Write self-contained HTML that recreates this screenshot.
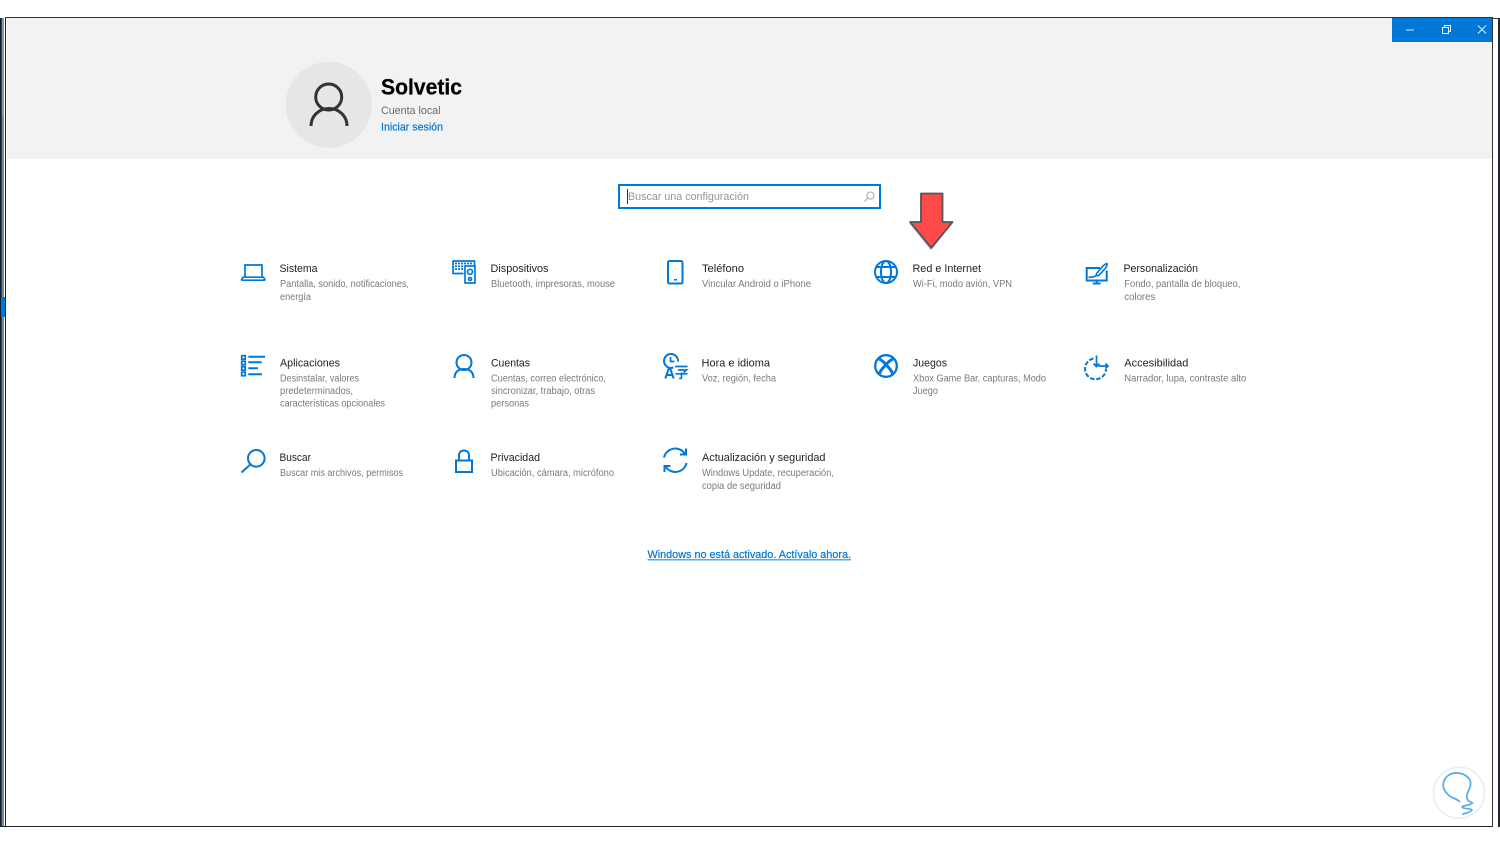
<!DOCTYPE html>
<html lang="es"><head><meta charset="utf-8"><title>Configuración</title>
<style>
html,body{margin:0;padding:0;width:1500px;height:844px;overflow:hidden;background:#fff}
svg{display:block;position:absolute;left:0;top:0}
text{font-family:"Liberation Sans",sans-serif}
.t{font-size:11px;fill:#222}
.s{font-size:10px;fill:#7a7a7a}
.b{stroke:#0078d7;stroke-width:.2}
.i{fill:none;stroke:#0078d7;stroke-width:2}
.j{fill:none;stroke:#0078d7;stroke-width:1.7}
</style></head><body>
<svg width="1500" height="844" viewBox="0 0 1500 844" xmlns="http://www.w3.org/2000/svg">
<!-- window frame -->
<rect x="0" y="18" width="1" height="808" fill="#10202c"/>
<rect x="1" y="18" width="1" height="808" fill="#2f3e4a"/>
<rect x="2" y="18" width="2" height="808" fill="#8f979e"/>
<rect x="1" y="115" width="1" height="711" fill="#0a4a80"/>
<rect x="2" y="115" width="2" height="711" fill="#76879a"/>
<rect x="1" y="297" width="4" height="20" fill="#0078d7"/>
<rect x="5" y="17" width="1" height="809" fill="#222"/>
<rect x="5" y="17" width="1488" height="1" fill="#333"/>
<rect x="0" y="826" width="1493" height="1" fill="#222"/>
<rect x="7" y="18" width="1485" height="141" fill="#f2f2f2"/>
<rect x="1492" y="18" width="1" height="809" fill="#333"/>
<rect x="1498" y="19" width="2" height="808" fill="#22262a"/>
<rect x="1493" y="18" width="7" height="1" fill="#333"/>
<!-- caption buttons -->
<rect x="1392" y="18" width="100" height="24" fill="#0078d7"/>
<rect x="1406" y="29.500" width="8" height="1" fill="#dbeaf8"/>
<path d="M1442.500 27.500h6v6h-6zM1444.500 27.500v-2h6v6h-2" fill="none" stroke="#fff" stroke-width="1"/>
<path d="M1478 25.500l8 8M1486 25.500l-8 8" fill="none" stroke="#e6f1fb" stroke-width="1"/>
<!-- profile -->
<circle cx="328.700" cy="104.800" r="43" fill="#e6e6e6"/>
<circle cx="328.700" cy="97" r="13" fill="none" stroke="#333" stroke-width="3"/>
<path d="M311 126c0-10 8-17.500 18-17.500s18 7.500 18 17.500" fill="none" stroke="#333" stroke-width="3"/>
<text x="381" y="94.500" font-size="22" font-weight="700" fill="#000" stroke="#000" stroke-width=".25" textLength="81" lengthAdjust="spacingAndGlyphs">Solvetic</text>
<text x="381" y="114" font-size="11" fill="#6b6b6b" textLength="59.500" lengthAdjust="spacingAndGlyphs">Cuenta local</text>
<text class="b" x="381" y="130.500" font-size="11" fill="#0078d7" textLength="62" lengthAdjust="spacingAndGlyphs">Iniciar sesión</text>
<!-- search -->
<rect x="619" y="185" width="261" height="23" fill="#fff" stroke="#0078d7" stroke-width="2"/>
<rect x="627" y="189" width="1" height="15" fill="#333"/>
<text x="628" y="200" font-size="11" fill="#959595" textLength="121" lengthAdjust="spacingAndGlyphs">Buscar una configuración</text>
<circle cx="870.500" cy="195.500" r="3.500" fill="none" stroke="#aaa" stroke-width="1"/>
<path d="M868 198l-3.500 3.500" fill="none" stroke="#aaa" stroke-width="1"/>
<!-- arrow -->
<path d="M921 194h21v28h10.500l-21 26-21-26H921z" fill="#000" opacity=".18" transform="translate(-1 2)"/>
<path d="M921 193.500h21.500v28.500h10l-21.200 26-21.200-26h10.900z" fill="#ff4a4a" stroke="#555" stroke-width="1.800" stroke-linejoin="round"/>
<!-- row 1 texts -->
<text class="t" x="279.500" y="272" textLength="38" lengthAdjust="spacingAndGlyphs">Sistema</text>
<text class="s" x="280" y="287" textLength="129" lengthAdjust="spacingAndGlyphs">Pantalla, sonido, notificaciones,</text>
<text class="s" x="280" y="300" textLength="31" lengthAdjust="spacingAndGlyphs">energía</text>
<text class="t" x="490.500" y="272" textLength="58" lengthAdjust="spacingAndGlyphs">Dispositivos</text>
<text class="s" x="491" y="287" textLength="124" lengthAdjust="spacingAndGlyphs">Bluetooth, impresoras, mouse</text>
<text class="t" x="702" y="272" textLength="42" lengthAdjust="spacingAndGlyphs">Teléfono</text>
<text class="s" x="702" y="287" textLength="109" lengthAdjust="spacingAndGlyphs">Vincular Android o iPhone</text>
<text class="t" x="912.500" y="272" textLength="68.500" lengthAdjust="spacingAndGlyphs">Red e Internet</text>
<text class="s" x="913" y="287" textLength="99" lengthAdjust="spacingAndGlyphs">Wi-Fi, modo avión, VPN</text>
<text class="t" x="1123.500" y="272" textLength="74.500" lengthAdjust="spacingAndGlyphs">Personalización</text>
<text class="s" x="1124.300" y="287" textLength="116" lengthAdjust="spacingAndGlyphs">Fondo, pantalla de bloqueo,</text>
<text class="s" x="1124.300" y="300" textLength="31" lengthAdjust="spacingAndGlyphs">colores</text>
<!-- row 2 texts -->
<text class="t" x="280" y="366.700" textLength="60" lengthAdjust="spacingAndGlyphs">Aplicaciones</text>
<text class="s" x="280" y="381.700" textLength="79" lengthAdjust="spacingAndGlyphs">Desinstalar, valores</text>
<text class="s" x="280" y="394.200" textLength="73" lengthAdjust="spacingAndGlyphs">predeterminados,</text>
<text class="s" x="280" y="406.700" textLength="105" lengthAdjust="spacingAndGlyphs">características opcionales</text>
<text class="t" x="491" y="366.700" textLength="39" lengthAdjust="spacingAndGlyphs">Cuentas</text>
<text class="s" x="491" y="381.700" textLength="115" lengthAdjust="spacingAndGlyphs">Cuentas, correo electrónico,</text>
<text class="s" x="491" y="394.200" textLength="104" lengthAdjust="spacingAndGlyphs">sincronizar, trabajo, otras</text>
<text class="s" x="491" y="406.700" textLength="38" lengthAdjust="spacingAndGlyphs">personas</text>
<text class="t" x="701.500" y="366.700" textLength="68.500" lengthAdjust="spacingAndGlyphs">Hora e idioma</text>
<text class="s" x="702" y="381.700" textLength="74" lengthAdjust="spacingAndGlyphs">Voz, región, fecha</text>
<text class="t" x="913" y="366.700" textLength="34" lengthAdjust="spacingAndGlyphs">Juegos</text>
<text class="s" x="913" y="381.700" textLength="133" lengthAdjust="spacingAndGlyphs">Xbox Game Bar, capturas, Modo</text>
<text class="s" x="913" y="394.200" textLength="25" lengthAdjust="spacingAndGlyphs">Juego</text>
<text class="t" x="1124.300" y="366.700" textLength="64" lengthAdjust="spacingAndGlyphs">Accesibilidad</text>
<text class="s" x="1124.300" y="381.700" textLength="122" lengthAdjust="spacingAndGlyphs">Narrador, lupa, contraste alto</text>
<!-- row 3 texts -->
<text class="t" x="279.500" y="461" textLength="31.500" lengthAdjust="spacingAndGlyphs">Buscar</text>
<text class="s" x="280" y="476" textLength="123" lengthAdjust="spacingAndGlyphs">Buscar mis archivos, permisos</text>
<text class="t" x="490.500" y="461" textLength="49.500" lengthAdjust="spacingAndGlyphs">Privacidad</text>
<text class="s" x="491" y="476" textLength="123" lengthAdjust="spacingAndGlyphs">Ubicación, cámara, micrófono</text>
<text class="t" x="702" y="461" textLength="123.500" lengthAdjust="spacingAndGlyphs">Actualización y seguridad</text>
<text class="s" x="702" y="476" textLength="132" lengthAdjust="spacingAndGlyphs">Windows Update, recuperación,</text>
<text class="s" x="702" y="489" textLength="79" lengthAdjust="spacingAndGlyphs">copia de seguridad</text>
<!-- link -->
<text class="b" x="647.500" y="558" font-size="11" fill="#0078d7" textLength="203.500" lengthAdjust="spacingAndGlyphs">Windows no está activado. Actívalo ahora.</text>
<rect x="647.500" y="559" width="203.500" height="1.500" fill="#4fb0ee"/>
<!-- icons row 1 -->
<path class="j" d="M245 277v-12h17v12"/>
<path class="j" d="M242 280.200h22.500c.5 0 .5-.5.200-1l-1.200-2h-20.500l-1.200 2c-.3.500-.3 1 .2 1z" stroke-width="1.500" stroke-linejoin="round"/>
<g class="j">
<path d="M463.500 273.500h-10.500v-12.500h21.500v4.500"/>
<rect x="465" y="266" width="10" height="17"/>
<circle cx="470" cy="271.800" r="2.500"/>
<circle cx="470" cy="279" r="1.500"/>
<path d="M455 263.500h18M455 266.200h8M455 269h8" stroke-dasharray="2 1"/>
</g>
<rect x="668" y="261" width="14.500" height="22.500" rx="1.500" class="i"/>
<rect x="674" y="279" width="3" height="1.500" fill="#0078d7"/>
<g class="i">
<circle cx="886" cy="272" r="11"/>
<ellipse cx="886" cy="272" rx="5" ry="11"/>
<path d="M876.500 267h19M876.500 277h19"/>
</g>
<g class="j">
<path d="M1100 268h-13.300v12.500h20v-10" stroke-width="2"/>
<path d="M1096.700 283.500v-3M1092.700 283.500h8" stroke-width="2"/>
<path d="M1107 263.500c-1.500 0-3.500 2-5 3.500l-5 6c-1 1.200-.8 2-.2 2.500.8.600 1.700.2 2.700-.8l5.500-6c1.500-1.800 2.500-4 2-5.200z" stroke-width="1.600"/>
<path d="M1096 275.500c-1 1.500-4 1.800-7.500 1.800" stroke-width="1.600"/>
</g>
<!-- icons row 2 -->
<g class="j" stroke-width="1.500">
<rect x="241.700" y="355.700" width="3.500" height="3.500"/>
<rect x="241.700" y="361.200" width="3.500" height="3.500"/>
<rect x="241.700" y="366.700" width="3.500" height="3.500"/>
<rect x="241.700" y="372.200" width="3.500" height="3.500"/>
</g>
<path d="M248.300 356.700h16.700M248.300 362.300h13.400M248.300 368.300h9.700M248.300 374.300h13.700" fill="none" stroke="#0078d7" stroke-width="2"/>
<circle cx="464" cy="362.500" r="7.500" class="i"/>
<path class="i" d="M454.500 378c0-6 4-9 9.500-9s9.500 3 9.500 9"/>
<g class="j">
<path d="M673.500 367.500a7 7 0 1 1 4.500-6" stroke-width="2"/>
<path d="M670.500 357v4.500h4" stroke-width="1.700"/>
<path d="M665.300 378.500l3.500-10h1.400l3.500 10M666.700 375h6" stroke-width="2"/>
<path d="M675 366.500h12.500M678 370h8.500l-3 2.500M675.500 373.800h12M681.500 372.500v5.500l-2.200.8" stroke-width="1.700"/>
</g>
<circle cx="886" cy="366" r="10.800" fill="none" stroke="#0078d7" stroke-width="2.300"/>
<path d="M879 359c3 1.200 5.200 3.500 7 5.700 1.800-2.200 4-4.500 7-5.700M879 374.500c1-3.500 4-6.800 7-9.800 3 3 6 6.300 7 9.800" fill="none" stroke="#0078d7" stroke-width="3"/>
<g class="j">
<path d="M1096.500 355.500v10.800M1093.500 363.500l3 3 3-3"/>
<path d="M1098.500 366h9.500M1105.500 363.500l2.500 2.500-2.500 2.500"/>
<path d="M1093.500 358.500a10.500 10.500 0 1 0 12.500 10.500" stroke-dasharray="4.500 1.800" stroke-width="2"/>
</g>
<!-- icons row 3 -->
<circle cx="256.300" cy="458.300" r="8.300" class="i"/>
<path d="M250 464.800L241.500 472.500" fill="none" stroke="#0078d7" stroke-width="2"/>
<rect x="456" y="460.500" width="16" height="11.500" class="i"/>
<path class="i" d="M459 460.500v-5c0-3 2-5 5-5s5 2 5 5v5"/>
<g class="j">
<path d="M664 457.500A11.500 11.500 0 0 1 685 454" stroke-width="2"/>
<path d="M686 448.500v6h-6" stroke-width="2"/>
<path d="M686.500 463A11.500 11.500 0 0 1 665.500 466.500" stroke-width="2"/>
<path d="M664.500 472v-6h6" stroke-width="2"/>
</g>
<!-- watermark -->
<circle cx="1459" cy="792.700" r="25.500" fill="#fff" stroke="#e6edf4" stroke-width="1.500"/>
<path d="M1459.500 801.500c-3-3-8-3.500-11-6.500-4-3.500-6-8-5-12.500 1.500-6 7-10 14-9.500 6 .3 11.500 3.500 13 9 1 5-2.500 8-3.500 13-.5 3 .5 5.500 2.500 6.500l3 1.500c-2 2.500-8 2-10.500 4 2 2.500 9 1 10 3-1 2-6 3-9 4" fill="none" stroke="#5aaee3" stroke-width="1.800" stroke-linecap="round" stroke-linejoin="round"/>
</svg>
</body></html>
